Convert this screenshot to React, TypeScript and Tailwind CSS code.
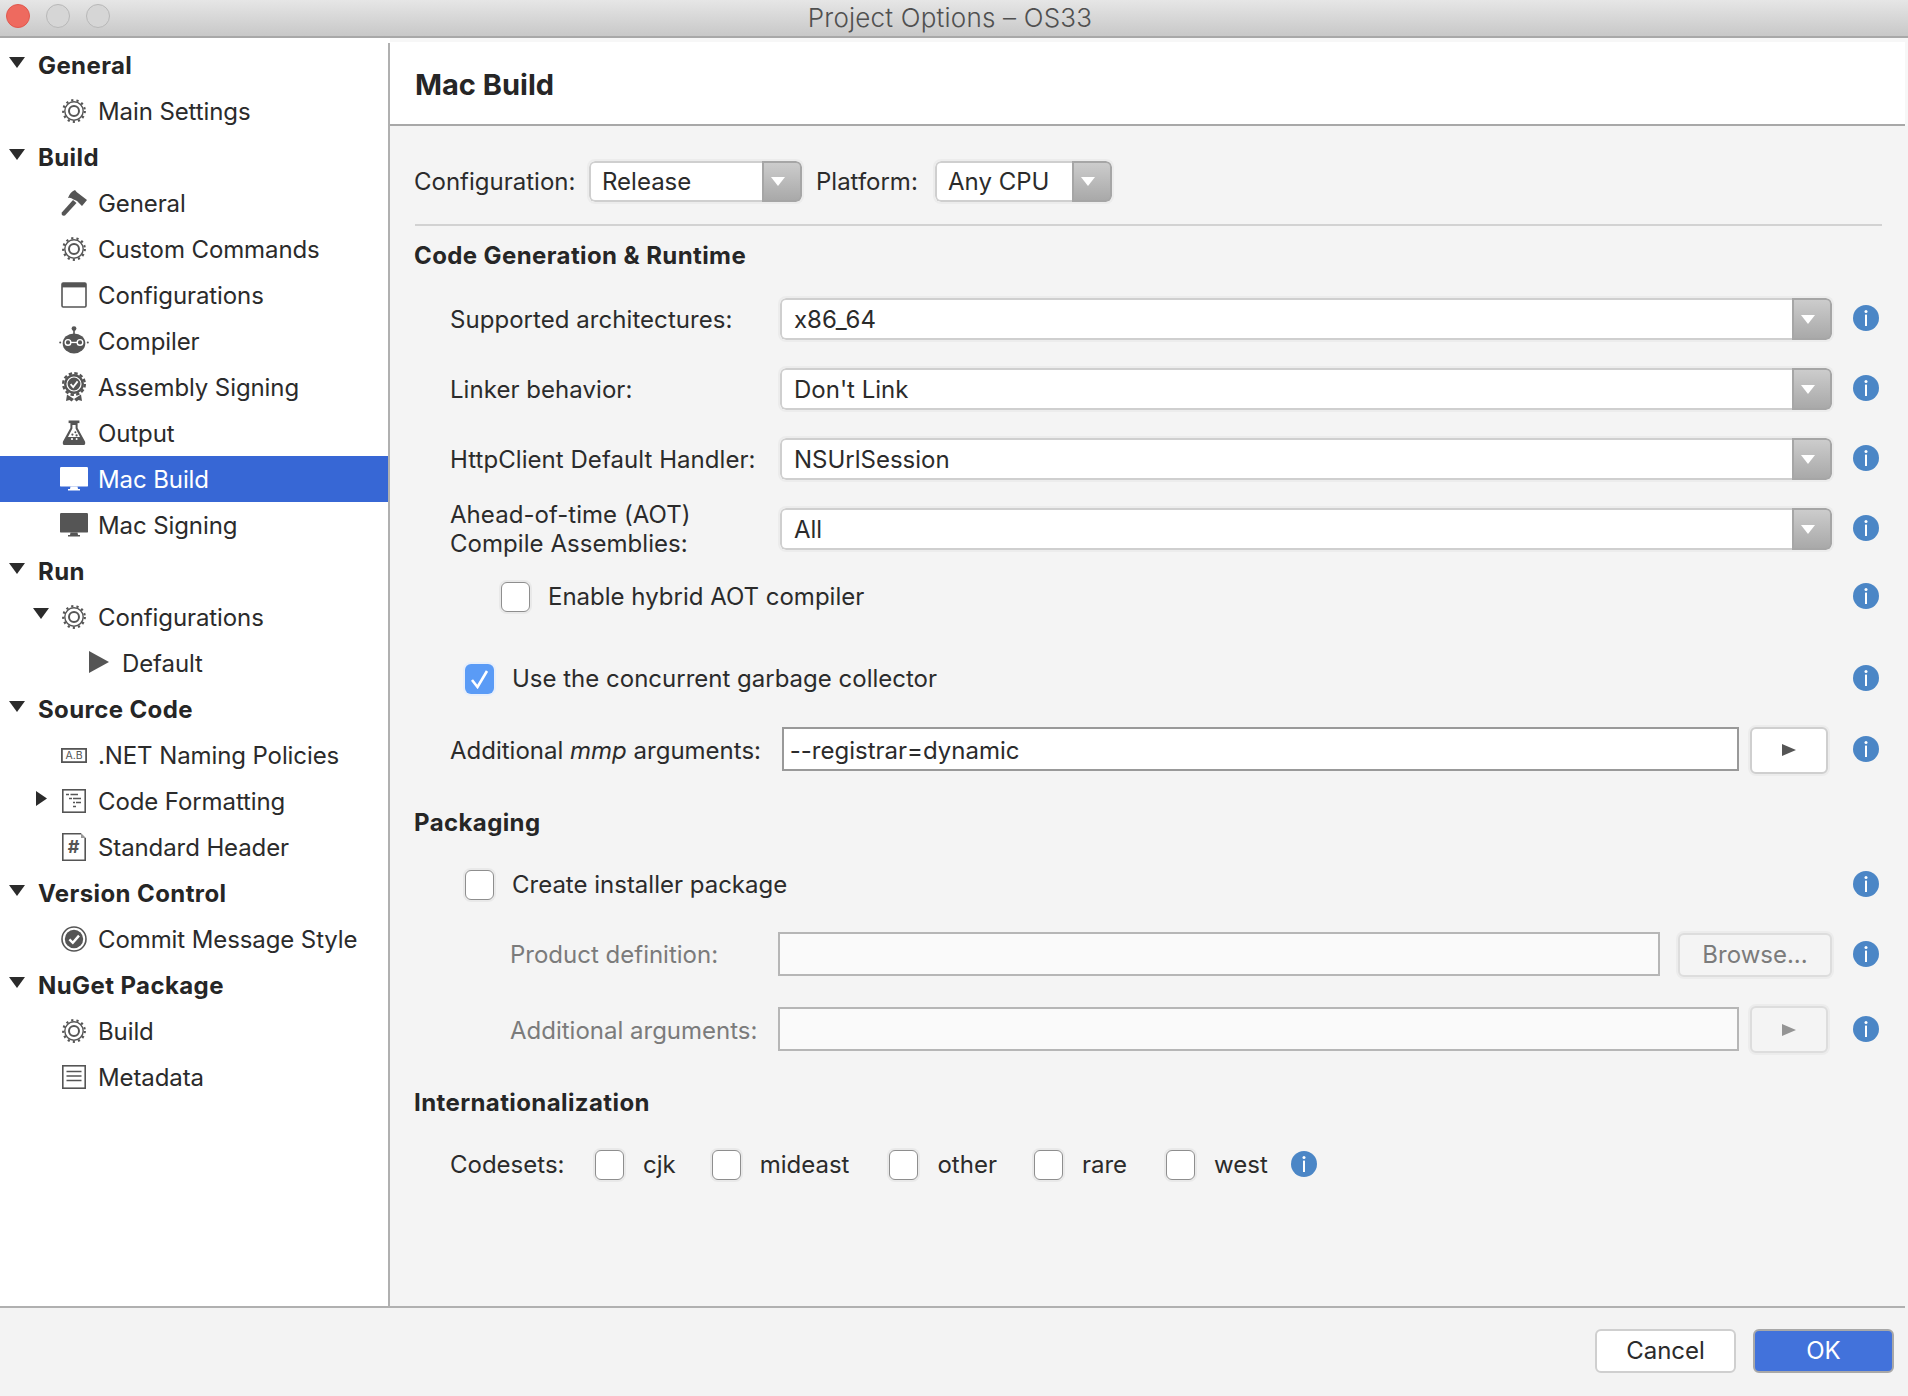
import React from "react";

const S = "#555555";

function Gear({ color = S }: { color?: string }) {
  return (
    <svg width="26" height="26" viewBox="0 0 26 26" fill="none">
      <circle cx="13" cy="13" r="10.8" stroke={color} strokeWidth="2.2" strokeDasharray="2.2 3.1" />
      <circle cx="13" cy="13" r="9.2" stroke={color} strokeWidth="1.4" />
      <circle cx="13" cy="13" r="5" stroke={color} strokeWidth="2" />
    </svg>
  );
}
function Hammer() {
  return (
    <svg width="26" height="26" viewBox="0 0 26 26" fill={S}>
      <path d="M0.8 22.5 L12 10 L15.5 13 L4 25.5 Q2 26 1 25 Q0.4 24 0.8 22.5Z" />
      <path d="M7 8 Q9 2 14 0 L15.6 2 L26 10 L21 16 L16 11 L12.6 9.4 Q9.4 7 7 8Z" />
    </svg>
  );
}
function WindowIcon() {
  return (
    <svg width="26" height="26" viewBox="0 0 26 26" fill="none">
      <rect x="1" y="1" width="24" height="24" rx="1.2" stroke={S} strokeWidth="1.6" />
      <rect x="1" y="1" width="24" height="4.4" fill={S} />
    </svg>
  );
}
function Robot() {
  return (
    <svg width="30" height="30" viewBox="0 0 30 30" fill={S}>
      <circle cx="15" cy="2.6" r="2.4" />
      <rect x="14.2" y="3" width="1.6" height="6" />
      <ellipse cx="15" cy="17.4" rx="11.3" ry="10" />
      <circle cx="1.2" cy="16.4" r="1" />
      <circle cx="28.8" cy="16.4" r="1" />
      <circle cx="9" cy="16.4" r="2.8" fill="none" stroke="#fff" strokeWidth="1.4" />
      <circle cx="21" cy="16.4" r="2.8" fill="none" stroke="#fff" strokeWidth="1.4" />
      <rect x="11.6" y="15.8" width="6.8" height="1.3" fill="#fff" />
    </svg>
  );
}
function Badge() {
  return (
    <svg width="26" height="30" viewBox="0 0 26 30" fill="none">
      <circle cx="13" cy="12" r="10.8" stroke={S} strokeWidth="2.4" strokeDasharray="3.4 2.25" />
      <circle cx="13" cy="12" r="10" fill={S} />
      <circle cx="13" cy="12" r="7" stroke="#fff" strokeWidth="1.2" />
      <path d="M9.6 12.2 L12.2 15 L16.6 9.4" stroke="#fff" strokeWidth="1.8" />
      <path d="M6 22.5 L13 27 L10.5 29.5 L8.5 28 L5 29 Z M20 22.5 L13 27 L15.5 29.5 L17.5 28 L21 29 Z" fill={S} />
    </svg>
  );
}
function Flask() {
  return (
    <svg width="24" height="26" viewBox="0 0 24 26" fill={S}>
      <rect x="6.6" y="0.5" width="10.8" height="2.6" />
      <path fillRule="evenodd" d="M8.4 3 L15.6 3 L15.6 8 L23 21.4 Q24 25 21 25 L3 25 Q0 25 1 21.4 L8.4 8 Z M10.4 5 L10.4 8.6 L6 17 L18 17 L13.6 8.6 L13.6 5 Z" />
      <circle cx="10.4" cy="14.6" r="1.1" />
      <circle cx="13.4" cy="12.2" r="1" />
      <circle cx="14.6" cy="15.4" r="1.1" />
      <circle cx="10" cy="19" r="1.1" fill="#fff" />
      <circle cx="14.6" cy="19" r="1" fill="#fff" />
    </svg>
  );
}
function Monitor({ color = S }: { color?: string }) {
  return (
    <svg width="28" height="24" viewBox="0 0 28 24" fill={color}>
      <rect x="0" y="0" width="28" height="19.6" rx="1.2" />
      <path d="M10.5 19.6 L17.5 19.6 L18 22 L20 22 L20 23.6 L8 23.6 L8 22 L10 22 Z" />
    </svg>
  );
}
function NameIcon() {
  return (
    <svg width="26" height="15" viewBox="0 0 26 15" fill="none">
      <rect x="0.9" y="0.9" width="24.2" height="13.2" stroke={S} strokeWidth="1.8" />
      <text x="13" y="11.2" textAnchor="middle" fontSize="10.5" fill={S} fontFamily="Inter, sans-serif">A.B</text>
    </svg>
  );
}
function FormatIcon() {
  return (
    <svg width="24" height="24" viewBox="0 0 24 24" fill="none">
      <rect x="0.8" y="0.8" width="22.4" height="22.4" stroke={S} strokeWidth="1.6" />
      <path d="M4 5.5 H7 M8.5 5.5 H16 M7 9.5 H10 M11 9.5 H19 M11 13.5 H13 M14 13.5 H19 M11 17.5 H14" stroke={S} strokeWidth="1.6" />
    </svg>
  );
}
function HashIcon() {
  return (
    <svg width="24" height="28" viewBox="0 0 24 28" fill="none">
      <path d="M19 0.8 H0.8 V27.2 H23.2 V5" stroke={S} strokeWidth="1.6" />
      <path d="M19 0 L24 5 L19 5Z" fill="#999" />
      <text x="11.6" y="19.6" textAnchor="middle" fontSize="18" fontWeight="700" fill={S} fontFamily="Inter, sans-serif">#</text>
    </svg>
  );
}
function CommitIcon() {
  return (
    <svg width="26" height="26" viewBox="0 0 26 26" fill="none">
      <circle cx="13" cy="13" r="12" stroke={S} strokeWidth="1.6" />
      <circle cx="13" cy="13" r="9.2" fill={S} />
      <path d="M8.4 13.4 L11.8 16.8 L18 9.6" stroke="#fff" strokeWidth="2.4" />
    </svg>
  );
}
function MetaIcon() {
  return (
    <svg width="24" height="24" viewBox="0 0 24 24" fill="none">
      <rect x="0.8" y="0.8" width="22.4" height="22.4" stroke={S} strokeWidth="1.6" />
      <path d="M4.5 6.5 H19.5 M4.5 11 H19.5 M4.5 15.5 H19.5" stroke={S} strokeWidth="1.6" />
    </svg>
  );
}

function Down({ className = "" }: { className?: string }) {
  return (
    <svg width="16" height="11" viewBox="0 0 16 11" className={className}>
      <path d="M0 0 H16 L8 11Z" fill="#2b2b2b" />
    </svg>
  );
}
function RightTri() {
  return (
    <svg width="11" height="15" viewBox="0 0 11 15">
      <path d="M0 0 L11 7.5 L0 15Z" fill="#2b2b2b" />
    </svg>
  );
}

function Heading({ label }: { label: string }) {
  return (
    <div className="flex h-[46px] items-center">
      <Down className="ml-[9px] mb-[6px]" />
      <span className="ml-[13px] pt-[1px] font-bold tracking-[0.4px] text-[#262626]">{label}</span>
    </div>
  );
}
function Item({
  icon,
  label,
  selected,
  pre,
}: {
  icon: React.ReactNode;
  label: string;
  selected?: boolean;
  pre?: React.ReactNode;
}) {
  return (
    <div className={`relative flex h-[46px] items-center ${selected ? "bg-[#3767d5] text-white" : "text-[#2b2b2b]"}`}>
      {pre}
      <span className="flex w-[98px] justify-end pr-[9px]">
        <span className="flex w-[30px] justify-center">{icon}</span>
      </span>
      <span className="pt-[1px] tracking-[-0.1px]">{label}</span>
    </div>
  );
}

function Sidebar() {
  return (
    <aside className="w-[388px] shrink-0 bg-white pt-[4px]">
      <Heading label="General" />
      <Item icon={<Gear />} label="Main Settings" />
      <Heading label="Build" />
      <Item icon={<Hammer />} label="General" />
      <Item icon={<Gear />} label="Custom Commands" />
      <Item icon={<WindowIcon />} label="Configurations" />
      <Item icon={<Robot />} label="Compiler" />
      <Item icon={<Badge />} label="Assembly Signing" />
      <Item icon={<Flask />} label="Output" />
      <Item icon={<Monitor color="#ffffff" />} label="Mac Build" selected />
      <Item icon={<Monitor />} label="Mac Signing" />
      <Heading label="Run" />
      <Item
        icon={<Gear />}
        label="Configurations"
        pre={<span className="absolute left-[33px] top-[14px]"><Down /></span>}
      />
      <div className="flex h-[46px] items-center text-[#2b2b2b]">
        <svg width="20" height="22" viewBox="0 0 20 22" className="ml-[89px] mb-[3px]">
          <path d="M0 0 L20 11 L0 22Z" fill={S} />
        </svg>
        <span className="ml-[13px] pt-[1px] tracking-[-0.1px]">Default</span>
      </div>
      <Heading label="Source Code" />
      <Item icon={<NameIcon />} label=".NET Naming Policies" />
      <Item
        icon={<FormatIcon />}
        label="Code Formatting"
        pre={<span className="absolute left-[36px] top-[13px] flex"><RightTri /></span>}
      />
      <Item icon={<HashIcon />} label="Standard Header" />
      <Heading label="Version Control" />
      <Item icon={<CommitIcon />} label="Commit Message Style" />
      <Heading label="NuGet Package" />
      <Item icon={<Gear />} label="Build" />
      <Item icon={<MetaIcon />} label="Metadata" />
    </aside>
  );
}

function Info({ className = "" }: { className?: string }) {
  return (
    <svg width="26" height="26" viewBox="0 0 26 26" className={`shrink-0 mb-[2px] ${className}`}>
      <circle cx="13" cy="13" r="13" fill="#4b86c6" />
      <circle cx="13" cy="6.4" r="1.5" fill="#fff" />
      <rect x="12" y="9.6" width="2" height="11.4" fill="#fff" />
    </svg>
  );
}

function Select({ value, className = "", pl = "pl-[12px]" }: { value: string; className?: string; pl?: string }) {
  return (
    <div className={`flex overflow-hidden rounded-[6px] bg-white shadow-[0_0_0_2px_#ececec] ${className}`}>
      <div className={`flex flex-1 items-center rounded-l-[6px] border-y-2 border-l-2 border-[#cfcfcf] pt-[1px] text-[#2b2b2b] ${pl}`}>
        {value}
      </div>
      <div className="flex w-[40px] items-center justify-center rounded-r-[6px] border-2 border-[#a6a6a6] bg-linear-to-b from-[#cccccc] to-[#a9a9a9] pr-[9px]">
        <svg width="14" height="9" viewBox="0 0 14 9"><path d="M0 0 H14 L7 9Z" fill="#fff" /></svg>
      </div>
    </div>
  );
}

function Check({ checked = false, className = "" }: { checked?: boolean; className?: string }) {
  if (checked) {
    return (
      <span className={`flex h-[30px] w-[29px] shrink-0 items-center justify-center rounded-[6px] bg-[#5a9bf6] shadow-[0_0_0_2px_#e8effa] ${className}`}>
        <svg width="20" height="20" viewBox="0 0 20 20" fill="none">
          <path d="M2 11 L7.5 18 L17 2" stroke="#fff" strokeWidth="2.6" />
        </svg>
      </span>
    );
  }
  return (
    <span className={`block h-[30px] w-[29px] shrink-0 rounded-[6px] border border-[#8e8e8e] bg-white shadow-[0_0_0_2px_#e9e9e9] ${className}`} />
  );
}

function Play({ color }: { color: string }) {
  return (
    <svg width="14" height="12" viewBox="0 0 14 12"><path d="M0 0 L14 6 L0 12Z" fill={color} /></svg>
  );
}

function SelectRow({ label, value, className = "" }: { label: React.ReactNode; value: string; className?: string }) {
  return (
    <div className={`flex h-[42px] items-center ${className}`}>
      <div className="w-[365px] pl-[35px] leading-[29px] tracking-[0.05px] text-[#2b2b2b]">{label}</div>
      <Select value={value} className="h-[42px] flex-1" />
      <div className="ml-[21px] flex"><Info /></div>
    </div>
  );
}

function SectionTitle({ label, className = "" }: { label: string; className?: string }) {
  return <div className={`-ml-[1px] flex h-[30px] items-center font-bold tracking-[0.4px] text-[#262626] ${className}`}>{label}</div>;
}

function CheckRow({ label, pl, className = "", checked }: { label: string; pl: string; className?: string; checked?: boolean }) {
  return (
    <div className={`flex h-[30px] items-center ${pl} ${className}`}>
      <Check checked={checked} />
      <span className="ml-[18px] flex-1 text-[#2b2b2b]">{label}</span>
      <Info />
    </div>
  );
}

function Codeset({ label, className }: { label: string; className: string }) {
  return (
    <>
      <Check className={className} />
      <span className="ml-[19px] text-[#2b2b2b]">{label}</span>
    </>
  );
}

function Form() {
  return (
    <div className="flex-1 bg-[#f4f4f4] pl-[25px] pt-[35px]">
      <div className="w-[1464px]">
        <div className="flex h-[41px] items-center text-[#2b2b2b]">
          <span className="-ml-[1px] w-[175px]">Configuration:</span>
          <Select value="Release" pl="pl-[11px]" className="h-[41px] w-[213px]" />
          <span className="ml-[14px] w-[119px]">Platform:</span>
          <Select value="Any CPU" pl="pl-[11px]" className="h-[41px] w-[177px]" />
        </div>
        <div className="mt-[22px] h-[2px] w-[1467px] bg-[#d2d2d2]" />
        <SectionTitle label="Code Generation & Runtime" className="mt-[15px]" />
        <SelectRow label="Supported architectures:" value="x86_64" className="mt-[27px]" />
        <SelectRow label="Linker behavior:" value="Don't Link" className="mt-[28px]" />
        <SelectRow label="HttpClient Default Handler:" value="NSUrlSession" className="mt-[28px]" />
        <SelectRow
          label={<>Ahead-of-time (AOT)<br />Compile Assemblies:</>}
          value="All"
          className="mt-[28px]"
        />
        <CheckRow label="Enable hybrid AOT compiler" pl="pl-[86px]" className="mt-[32px]" />
        <CheckRow label="Use the concurrent garbage collector" pl="pl-[50px]" className="mt-[52px]" checked />
        <div className="mt-[33px] flex h-[46px] items-center">
          <div className="w-[367px] pl-[35px] pt-[2px] text-[#2b2b2b]">Additional <em>mmp</em> arguments:</div>
          <div className="mb-[2px] flex h-[44px] w-[958px] items-center border-2 border-[#999999] bg-white pl-[6px] pt-[3px] text-[#2b2b2b]">--registrar=dynamic</div>
          <div className="ml-[11px] flex h-[47px] w-[78px] shrink-0 items-center justify-center rounded-[6px] border-2 border-[#cfcfcf] bg-white shadow-[0_0_0_2px_#ececec]">
            <Play color="#555555" />
          </div>
          <div className="ml-[25px] flex"><Info /></div>
        </div>
        <SectionTitle label="Packaging" className="mt-[35px]" />
        <CheckRow label="Create installer package" pl="pl-[50px]" className="mt-[32px]" />
        <div className="mt-[33px] flex h-[44px] items-center">
          <div className="w-[363px] pl-[95px] text-[#7b7b7b]">Product definition:</div>
          <div className="mb-[2px] h-[44px] w-[882px] border-2 border-[#b6b6b6] bg-[#fafafa]" />
          <div className="ml-[18px] flex h-[44px] w-[154px] items-center justify-center rounded-[6px] border-2 border-[#dddddd] bg-[#f4f4f4] text-[#7b7b7b] shadow-[0_0_0_2px_#ececec]">Browse...</div>
          <div className="ml-[21px] flex"><Info /></div>
        </div>
        <div className="mt-[29px] flex h-[47px] items-center">
          <div className="w-[363px] pl-[95px] pt-[2px] text-[#7b7b7b]">Additional arguments:</div>
          <div className="mb-[1px] h-[44px] w-[962px] border-2 border-[#b6b6b6] bg-[#fafafa]" />
          <div className="ml-[11px] flex h-[47px] w-[78px] shrink-0 items-center justify-center rounded-[6px] border-2 border-[#dddddd] bg-[#f4f4f4] shadow-[0_0_0_2px_#ececec]">
            <Play color="#949494" />
          </div>
          <div className="ml-[25px] flex"><Info /></div>
        </div>
        <SectionTitle label="Internationalization" className="mt-[35px]" />
        <div className="mt-[32px] flex h-[30px] items-center">
          <span className="ml-[35px] w-[145px] text-[#2b2b2b]">Codesets:</span>
          <Codeset label="cjk" className="" />
          <Codeset label="mideast" className="ml-[36px]" />
          <Codeset label="other" className="ml-[40px]" />
          <Codeset label="rare" className="ml-[37px]" />
          <Codeset label="west" className="ml-[39px]" />
          <Info className="ml-[23px]" />
        </div>
      </div>
    </div>
  );
}

function Traffic({ className }: { className: string }) {
  return <span className={`block h-[24px] w-[24px] rounded-full ${className}`} />;
}

export default function App() {
  return (
    <div className="flex h-[1396px] w-[1908px] flex-col overflow-hidden bg-white font-['Inter',sans-serif] text-[24px]">
      <header className="relative flex h-[38px] shrink-0 items-center justify-center border-b-2 border-[#a8a8a8] bg-linear-to-b from-[#e6e6e6] to-[#c8c8c8] pb-[2px] pr-[8px]">
        <div className="absolute left-[6px] top-[4px] flex gap-[16px]">
          <Traffic className="bg-[#ee6a5f] border border-[#e0584e]" />
          <Traffic className="bg-[#d6d6d6] border border-[#b8b8b8]" />
          <Traffic className="bg-[#d6d6d6] border border-[#b8b8b8]" />
        </div>
        <span className="text-[26px] font-light tracking-[0.2px] text-[#505050]">Project Options – OS33</span>
      </header>
      <div className="flex h-[1268px] shrink-0">
        <Sidebar />
        <div className="mt-[5px] w-[2px] shrink-0 bg-[#b0b0b0]" />
        <main className="flex flex-1 flex-col bg-[#f7f7f7]">
          <div className="mr-[3px] mt-[4px] flex h-[84px] shrink-0 items-center border-b-2 border-[#a8a8a8] bg-white pl-[25px] pt-[3px] text-[29px] font-bold text-[#262626]">
            Mac Build
          </div>
          <Form />
        </main>
      </div>
      <footer className="flex flex-1 flex-col bg-[#f3f3f3]">
        <div className="mr-[3px] h-[2px] bg-[#b0b0b0]" />
        <div className="flex justify-end gap-[17px] pr-[14px] pt-[21px]">
          <button className="h-[44px] w-[141px] rounded-[6px] border-2 border-[#cfcfcf] bg-white text-[#2b2b2b]">Cancel</button>
          <button className="h-[44px] w-[141px] rounded-[6px] border-2 border-[#a8a8a8] bg-[#4272db] text-white">OK</button>
        </div>
      </footer>
    </div>
  );
}
